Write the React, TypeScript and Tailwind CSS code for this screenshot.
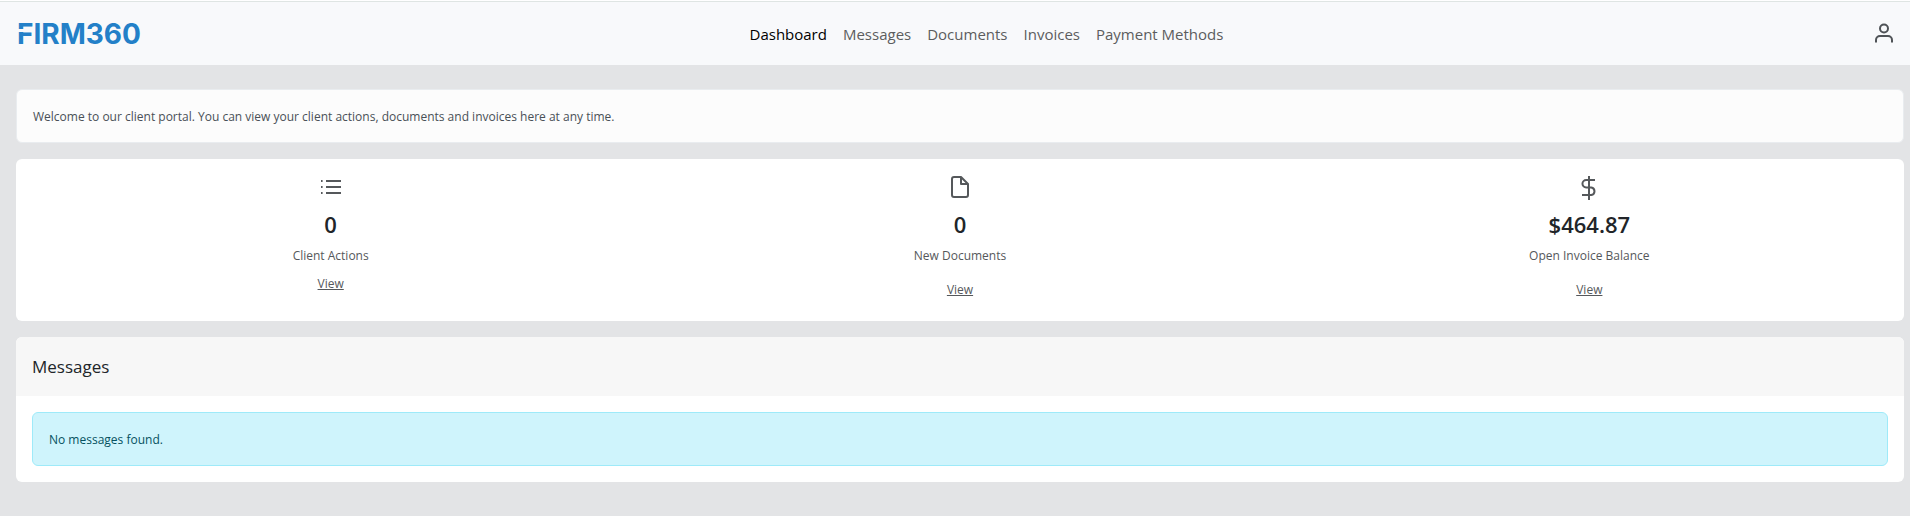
import type { ReactNode } from 'react';

interface Stat {
  id: string;
  icon: ReactNode;
  value: string;
  label: string;
  linkMargin: string;
}

const navItems = ['Dashboard', 'Messages', 'Documents', 'Invoices', 'Payment Methods'];

const iconProps = {
  width: 24,
  height: 24,
  viewBox: '0 0 24 24',
  fill: 'none',
  stroke: 'currentColor',
  strokeWidth: 2,
  'aria-hidden': true,
};

function UserIcon() {
  return (
    <svg {...iconProps}>
      <circle cx="12" cy="6.5" r="4" />
      <path d="M4 20.5V18a4 4 0 0 1 4-4h8a4 4 0 0 1 4 4v2.5" />
    </svg>
  );
}

function ListIcon() {
  return (
    <svg {...iconProps}>
      <path d="M7 5h15M7 11h15M7 17h15" />
      <path d="M2 5h1.6M2 11h1.6M2 17h1.6" />
    </svg>
  );
}

function FileIcon() {
  return (
    <svg {...iconProps} strokeLinejoin="round">
      <path d="M13 1H6a2 2 0 0 0-2 2v16a2 2 0 0 0 2 2h12a2 2 0 0 0 2-2V8z" />
      <path d="M13 1v7h7" />
    </svg>
  );
}

function DollarIcon() {
  return (
    <svg {...iconProps}>
      <path d="M12 0v24" />
      <path d="M18 4H9.2a3.5 3.5 0 0 0 0 7.5h5.1a3.8 3.8 0 0 1 0 7.5H5" />
    </svg>
  );
}

const stats: Stat[] = [
  { id: 'actions', icon: <ListIcon />, value: '0', label: 'Client Actions', linkMargin: 'mt-2' },
  { id: 'documents', icon: <FileIcon />, value: '0', label: 'New Documents', linkMargin: 'mt-3.5' },
  { id: 'balance', icon: <DollarIcon />, value: '$464.87', label: 'Open Invoice Balance', linkMargin: 'mt-3.5' },
];

function Logo() {
  return (
    <a href="#" className="relative font-[Inter,sans-serif] text-[28px] leading-8 font-bold text-[#2380c8]">
      FIRM360
      {/* slit under the top bar of the F */}
      <span className="absolute left-0 top-[11px] h-[3px] w-[18px] bg-[#f8f9fb]"></span>
    </a>
  );
}

export default function App() {
  return (
    <div className="min-h-screen bg-[#e3e4e6] pb-8 font-['Open_Sans','Noto_Sans',sans-serif] text-xs leading-5 text-[#212529]">
      <div className="h-px bg-white"></div>
      <header className="flex h-16 items-center border-t border-[#dfe5e3] bg-[#f8f9fb] pl-[17px] pr-3.5">
        <Logo />
        <nav className="mx-auto flex gap-4 text-[15px] leading-6">
          {navItems.map((item) => (
            <a key={item} href="#" className={item === 'Dashboard' ? 'text-black' : 'text-[#5c5d5e]'}>
              {item}
            </a>
          ))}
        </nav>
        <button type="button" aria-label="Account" className="pl-10 text-[#4f5357]">
          <UserIcon />
        </button>
      </header>

      <main className="flex flex-col gap-4 pt-6 pl-4 pr-1.5">
        <div className="rounded-md border border-[#e9ecef] bg-[#fcfcfc] px-4 pt-[17px] pb-[15px] text-[#495057]">
          Welcome to our client portal. You can view your client actions, documents and invoices here at any time.
        </div>

        <section className="grid grid-cols-3 rounded-md bg-white pt-[17px] pb-[21px]">
          {stats.map((stat) => (
            <div key={stat.id} className="flex flex-col items-center text-[#55585b]">
              {stat.icon}
              <p className="mt-2.5 text-[22px] leading-7 font-semibold text-[#212529]">{stat.value}</p>
              <p className="mt-2">{stat.label}</p>
              <a href="#" className={`underline underline-offset-1 ${stat.linkMargin}`}>
                View
              </a>
            </div>
          ))}
        </section>

        <section className="overflow-hidden rounded-md bg-white">
          <h2 className="bg-[#f7f7f7] px-4 py-4 text-[17px] leading-[27px]">Messages</h2>
          <div className="p-4">
            <div role="status" className="rounded-md border border-[#9eeaf9] bg-[#cff4fc] px-4 pt-[17px] pb-[15px] text-[#055160]">
              No messages found.
            </div>
          </div>
        </section>
      </main>
    </div>
  );
}
